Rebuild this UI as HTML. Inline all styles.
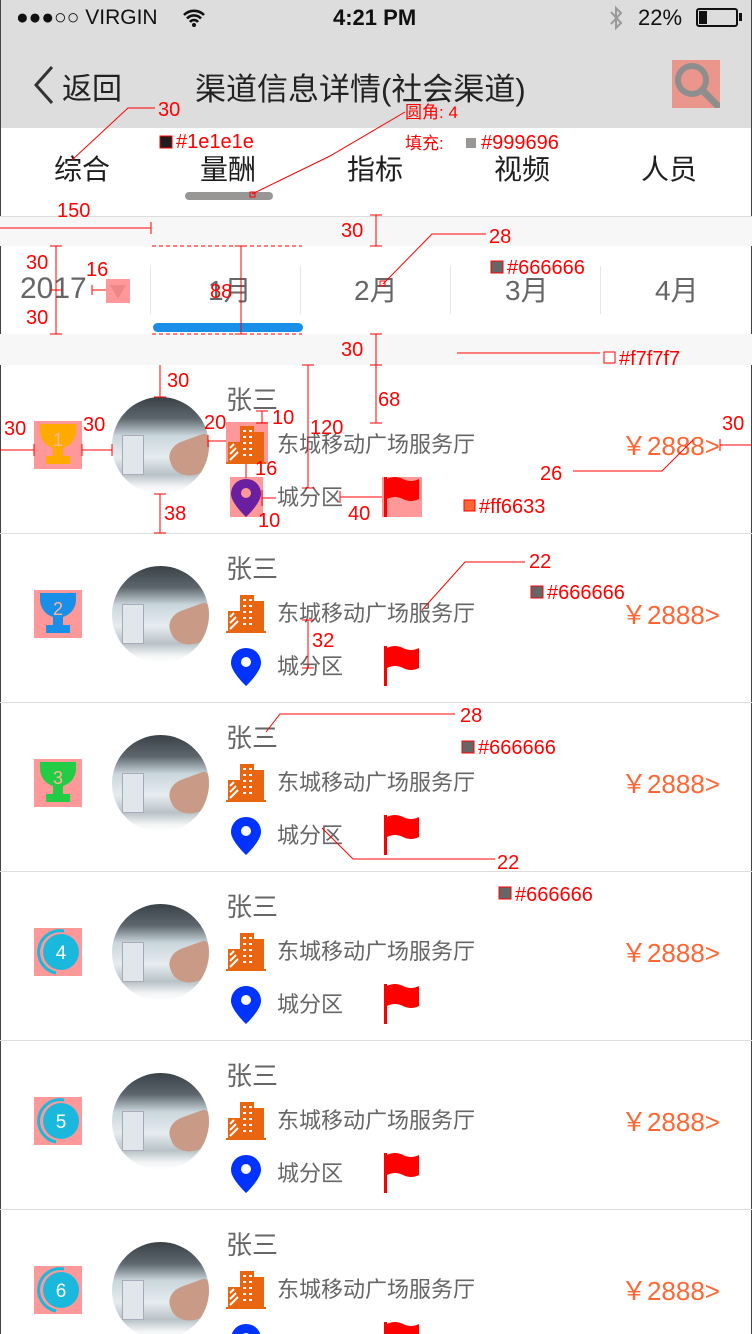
<!DOCTYPE html>
<html><head><meta charset="utf-8"><style>
*{margin:0;padding:0;box-sizing:border-box}
html,body{width:752px;height:1334px;overflow:hidden}
body{position:relative;background:#fff;font-family:"Liberation Sans","Noto Sans CJK SC",sans-serif;color:#1e1e1e}
.a{position:absolute;white-space:nowrap}
.sep{position:absolute;left:0;width:752px;height:1px;background:#ddd}
.name{font-size:26px;color:#666;line-height:30px}
.av{position:absolute;left:112px;width:97px;height:97px;border-radius:50%;overflow:hidden;background:linear-gradient(180deg,#3a4248 0%,#5c666c 22%,#c9d6dc 40%,#e6ecee 62%,#b8c2c6 80%,#f2f4f5 92%,#fff 100%)}
.av i{position:absolute;left:58px;top:42px;width:44px;height:36px;background:#c99a86;border-radius:40% 10% 10% 50%;transform:rotate(-20deg)}
.av b{position:absolute;left:10px;top:38px;width:22px;height:40px;background:#dfe7ea;border:1px solid #aab}
.rk{position:absolute;left:34px;width:48px;height:48px;background:#ff9999}
.pr{position:absolute;right:32px;font-size:26px;color:#ff6633;line-height:30px}
.t22{font-size:22px;color:#666;line-height:26px}
</style></head><body>
<div class="a" style="left:0;top:0;width:752px;height:128px;background:#dddddd"></div>
<div class="a" style="left:0;top:0;width:1px;height:1334px;background:#444"></div>
<div class="a" style="left:751px;top:0;width:1px;height:1334px;background:#444"></div>
<div class="a" style="left:16px;top:6px;font-size:21px;color:#111">●●●○○ VIRGIN</div>
<svg class="a" style="left:182px;top:8px" width="24" height="20" viewBox="0 0 24 20"><path d="M2 7a14 14 0 0 1 20 0M5 10.5a9.5 9.5 0 0 1 14 0M8 14a5 5 0 0 1 8 0" stroke="#111" stroke-width="2.6" fill="none"/><circle cx="12" cy="17" r="2" fill="#111"/></svg>
<div class="a" style="left:333px;top:5px;font-size:22px;font-weight:bold;color:#111">4:21 PM</div>
<svg class="a" style="left:608px;top:4px" width="16" height="28"><path d="M3 8l10 11-5 5V4l5 5L3 20" stroke="#999" stroke-width="2" fill="none"/></svg>
<div class="a" style="left:638px;top:5px;font-size:22px;color:#111">22%</div>
<div class="a" style="left:696px;top:8px;width:42px;height:19px;border:2px solid #111;border-radius:3px"><div style="width:8px;height:13px;background:#111;margin:1px"></div></div>
<div class="a" style="left:739px;top:13px;width:3px;height:8px;background:#111"></div>
<svg class="a" style="left:30px;top:64px" width="26" height="42"><path d="M22 3L6 21L22 39" stroke="#333" stroke-width="3" fill="none"/></svg>
<div class="a" style="left:62px;top:64px;font-size:30px;color:#222">返回</div>
<div class="a" style="left:195px;top:64px;font-size:31px;color:#222">渠道信息详情(社会渠道)</div>
<div class="a" style="left:672px;top:60px;width:48px;height:48px;background:#eb968c"></div>
<svg class="a" style="left:672px;top:60px" width="48" height="48"><circle cx="20" cy="20" r="14" stroke="#8e8e8e" stroke-width="6" fill="none"/><path d="M30 30L45 45" stroke="#8e8e8e" stroke-width="7" stroke-linecap="round"/></svg>
<div class="a" style="left:54px;top:148px;font-size:28px;color:#1e1e1e">综合</div>
<div class="a" style="left:200px;top:148px;font-size:28px;color:#1e1e1e">量酬</div>
<div class="a" style="left:347px;top:148px;font-size:28px;color:#1e1e1e">指标</div>
<div class="a" style="left:494px;top:148px;font-size:28px;color:#1e1e1e">视频</div>
<div class="a" style="left:641px;top:148px;font-size:28px;color:#1e1e1e">人员</div>
<div class="a" style="left:185px;top:192px;width:88px;height:8px;border-radius:4px;background:#999696"></div>
<div class="a" style="left:0;top:216px;width:752px;height:30px;background:#f7f7f7;border-top:1px solid #ddd"></div>
<div class="a" style="left:0;top:334px;width:752px;height:31px;background:#f7f7f7"></div>
<div class="a" style="left:20px;top:272px;font-size:30px;color:#666">2017</div>
<div class="a" style="left:106px;top:279px;width:24px;height:24px;background:#ff9999"></div>
<div class="a" style="left:110px;top:285px;width:0;height:0;border-left:8px solid transparent;border-right:8px solid transparent;border-top:14px solid #e88"></div>
<div class="a" style="left:150px;top:266px;width:1px;height:48px;background:#e6e6e6"></div>
<div class="a" style="left:300px;top:266px;width:1px;height:48px;background:#e6e6e6"></div>
<div class="a" style="left:450px;top:266px;width:1px;height:48px;background:#e6e6e6"></div>
<div class="a" style="left:600px;top:266px;width:1px;height:48px;background:#e6e6e6"></div>
<div class="a" style="left:208px;top:269px;font-size:28px;color:#666">1月</div>
<div class="a" style="left:354px;top:269px;font-size:28px;color:#666">2月</div>
<div class="a" style="left:505px;top:269px;font-size:28px;color:#666">3月</div>
<div class="a" style="left:655px;top:269px;font-size:28px;color:#666">4月</div>
<div class="a" style="left:153px;top:323px;width:150px;height:9px;border-radius:5px;background:#1a8fe8"></div>

<div class="sep" style="top:533px"></div><div class="sep" style="top:702px"></div><div class="sep" style="top:871px"></div><div class="sep" style="top:1040px"></div><div class="sep" style="top:1209px"></div>

<div class="rk" style="top:421px"></div>
<svg class="a" style="left:34px;top:421px" width="48" height="48"><path d="M6 3h36v6a18 18 0 0 1-13 18v8h7v8H12v-8h7v-8A18 18 0 0 1 6 9z" fill="#ffaa00"/><text x="24" y="25" font-size="18" text-anchor="middle" fill="#ffb59a" font-family="Liberation Sans">1</text></svg>
<div class="av" style="top:397px"><b></b><i></i></div>
<div class="a name" style="left:226px;top:385px">张三</div>
<div class="a" style="left:226px;top:422px;width:42px;height:42px;background:#ff9999"></div>
<div class="a" style="left:230px;top:477px;width:33px;height:40px;background:#ff9999"></div>
<div class="a" style="left:382px;top:477px;width:40px;height:40px;background:#ff9999"></div>
<div class="pr" style="top:431px">￥2888&gt;</div>

<div class="rk" style="top:590px"></div>
<svg class="a" style="left:34px;top:590px" width="48" height="48"><path d="M6 3h36v6a18 18 0 0 1-13 18v8h7v8H12v-8h7v-8A18 18 0 0 1 6 9z" fill="#1a8fe8"/><text x="24" y="25" font-size="18" text-anchor="middle" fill="#ffb59a" font-family="Liberation Sans">2</text></svg>
<div class="av" style="top:566px"><b></b><i></i></div>
<div class="a name" style="left:226px;top:554px">张三</div>
<div class="pr" style="top:600px">￥2888&gt;</div>
<div class="rk" style="top:759px"></div>
<svg class="a" style="left:34px;top:759px" width="48" height="48"><path d="M6 3h36v6a18 18 0 0 1-13 18v8h7v8H12v-8h7v-8A18 18 0 0 1 6 9z" fill="#22cc44"/><text x="24" y="25" font-size="18" text-anchor="middle" fill="#ffb59a" font-family="Liberation Sans">3</text></svg>
<div class="av" style="top:735px"><b></b><i></i></div>
<div class="a name" style="left:226px;top:723px">张三</div>
<div class="pr" style="top:769px">￥2888&gt;</div>
<div class="rk" style="top:928px"></div>
<svg class="a" style="left:34px;top:928px" width="48" height="48"><path d="M30 3A21 21 0 0 0 22 45" stroke="#1bb8dd" stroke-width="3" fill="none"/><circle cx="27" cy="24" r="18" fill="#1bb8dd"/><text x="27" y="31" font-size="19" text-anchor="middle" fill="#fff" font-family="Liberation Sans">4</text></svg>
<div class="av" style="top:904px"><b></b><i></i></div>
<div class="a name" style="left:226px;top:892px">张三</div>
<div class="pr" style="top:938px">￥2888&gt;</div>
<div class="rk" style="top:1097px"></div>
<svg class="a" style="left:34px;top:1097px" width="48" height="48"><path d="M30 3A21 21 0 0 0 22 45" stroke="#1bb8dd" stroke-width="3" fill="none"/><circle cx="27" cy="24" r="18" fill="#1bb8dd"/><text x="27" y="31" font-size="19" text-anchor="middle" fill="#fff" font-family="Liberation Sans">5</text></svg>
<div class="av" style="top:1073px"><b></b><i></i></div>
<div class="a name" style="left:226px;top:1061px">张三</div>
<div class="pr" style="top:1107px">￥2888&gt;</div>
<div class="rk" style="top:1266px"></div>
<svg class="a" style="left:34px;top:1266px" width="48" height="48"><path d="M30 3A21 21 0 0 0 22 45" stroke="#1bb8dd" stroke-width="3" fill="none"/><circle cx="27" cy="24" r="18" fill="#1bb8dd"/><text x="27" y="31" font-size="19" text-anchor="middle" fill="#fff" font-family="Liberation Sans">6</text></svg>
<div class="av" style="top:1242px"><b></b><i></i></div>
<div class="a name" style="left:226px;top:1230px">张三</div>
<div class="pr" style="top:1276px">￥2888&gt;</div>

<svg width="0" height="0" style="position:absolute"><defs>
<g id="bld"><rect x="14" y="2" width="14" height="36" fill="#e8660f"/><rect x="28" y="8" width="10" height="30" fill="#e8660f"/><rect x="2" y="18" width="12" height="20" fill="#e8660f"/><rect x="0" y="38" width="40" height="2" fill="#e8660f"/><path d="M17 7h3M23 7h3M17 13h3M23 13h3M17 19h3M23 19h3M17 25h3M23 25h3M17 31h3M23 31h3M4 24l4-4M4 30l6-6M4 36l8-8" stroke="#fff" stroke-width="2"/></g>
<g id="flag"><rect x="2" y="0" width="3" height="40" fill="#f00"/><path d="M5 2q8-4 16 0t16 0v20q-8 4-16 0t-16 0z" fill="#f00"/></g>
</defs></svg>
<div style="position:absolute;left:0;top:0">
<svg class="a" style="left:226px;top:424px" width="40" height="40"><use href="#bld"/></svg>
<svg class="a" style="left:230px;top:478px" width="33" height="40"><path d="M16 1C7 1 1 8 1 16c0 9 15 23 15 23s15-14 15-23C31 8 25 1 16 1z" fill="#6a1fa0"/><circle cx="16" cy="15" r="5" fill="#ff9999"/></svg>
<svg class="a" style="left:382px;top:477px" width="40" height="40"><use href="#flag"/></svg>
<div class="a t22" style="left:277px;top:432px">东城移动广场服务厅</div>
<div class="a t22" style="left:277px;top:485px">城分区</div>
</div>
<div style="position:absolute;left:0;top:169px">
<svg class="a" style="left:226px;top:424px" width="40" height="40"><use href="#bld"/></svg>
<svg class="a" style="left:230px;top:478px" width="33" height="40"><path d="M16 1C7 1 1 8 1 16c0 9 15 23 15 23s15-14 15-23C31 8 25 1 16 1z" fill="#0033ff"/><circle cx="16" cy="15" r="5" fill="#fff"/></svg>
<svg class="a" style="left:382px;top:477px" width="40" height="40"><use href="#flag"/></svg>
<div class="a t22" style="left:277px;top:432px">东城移动广场服务厅</div>
<div class="a t22" style="left:277px;top:485px">城分区</div>
</div>
<div style="position:absolute;left:0;top:338px">
<svg class="a" style="left:226px;top:424px" width="40" height="40"><use href="#bld"/></svg>
<svg class="a" style="left:230px;top:478px" width="33" height="40"><path d="M16 1C7 1 1 8 1 16c0 9 15 23 15 23s15-14 15-23C31 8 25 1 16 1z" fill="#0033ff"/><circle cx="16" cy="15" r="5" fill="#fff"/></svg>
<svg class="a" style="left:382px;top:477px" width="40" height="40"><use href="#flag"/></svg>
<div class="a t22" style="left:277px;top:432px">东城移动广场服务厅</div>
<div class="a t22" style="left:277px;top:485px">城分区</div>
</div>
<div style="position:absolute;left:0;top:507px">
<svg class="a" style="left:226px;top:424px" width="40" height="40"><use href="#bld"/></svg>
<svg class="a" style="left:230px;top:478px" width="33" height="40"><path d="M16 1C7 1 1 8 1 16c0 9 15 23 15 23s15-14 15-23C31 8 25 1 16 1z" fill="#0033ff"/><circle cx="16" cy="15" r="5" fill="#fff"/></svg>
<svg class="a" style="left:382px;top:477px" width="40" height="40"><use href="#flag"/></svg>
<div class="a t22" style="left:277px;top:432px">东城移动广场服务厅</div>
<div class="a t22" style="left:277px;top:485px">城分区</div>
</div>
<div style="position:absolute;left:0;top:676px">
<svg class="a" style="left:226px;top:424px" width="40" height="40"><use href="#bld"/></svg>
<svg class="a" style="left:230px;top:478px" width="33" height="40"><path d="M16 1C7 1 1 8 1 16c0 9 15 23 15 23s15-14 15-23C31 8 25 1 16 1z" fill="#0033ff"/><circle cx="16" cy="15" r="5" fill="#fff"/></svg>
<svg class="a" style="left:382px;top:477px" width="40" height="40"><use href="#flag"/></svg>
<div class="a t22" style="left:277px;top:432px">东城移动广场服务厅</div>
<div class="a t22" style="left:277px;top:485px">城分区</div>
</div>
<div style="position:absolute;left:0;top:845px">
<svg class="a" style="left:226px;top:424px" width="40" height="40"><use href="#bld"/></svg>
<svg class="a" style="left:230px;top:478px" width="33" height="40"><path d="M16 1C7 1 1 8 1 16c0 9 15 23 15 23s15-14 15-23C31 8 25 1 16 1z" fill="#0033ff"/><circle cx="16" cy="15" r="5" fill="#fff"/></svg>
<svg class="a" style="left:382px;top:477px" width="40" height="40"><use href="#flag"/></svg>
<div class="a t22" style="left:277px;top:432px">东城移动广场服务厅</div>
</div>

<svg class="a" style="left:0;top:0" width="752" height="1334">
<g stroke="#f00" stroke-width="1" fill="none">
<path d="M72 160L128 108H155"/><path d="M252 194L330 156L405 112"/>
<path d="M0 228H151M151 222v12"/><path d="M370 215h12M376 215v31M370 246h12"/>
<path d="M383 284L432 234H486"/>
<path d="M50 246h12M56 246v88M50 334h12M50 290h12"/><path d="M92 290h14M92 285v10"/>
<path d="M241 246v88M235 246h12M235 334h12"/>
<path d="M152 246h150M152 334h150" stroke-dasharray="4 3"/>
<path d="M370 334h12M376 334v31M370 365h12M376 365v58M370 423h12"/><path d="M457 353H600"/>
<path d="M0 450h34M34 444v12M82 450h30M82 444v12M112 444v12"/>
<path d="M160 365v32M154 397h12M160 494v39M154 494h12M154 533h12"/>
<path d="M208 441h18M208 435v12"/><path d="M262 411v12M256 411h12M256 423h12"/>
<path d="M246 464v14"/><path d="M262 490v16M262 498h14"/>
<path d="M308 365v123M302 365h12M302 488h12"/><path d="M340 497h42M340 491v12"/>
<path d="M720 445h32M720 439v12"/><path d="M573 471H662L693 440"/>
<path d="M422 610L465 562H525"/><path d="M308 630v-10v48M302 620h12M302 668h12"/>
<path d="M266 732L280 714H455"/><path d="M322 828L353 859H495"/>
</g>
<g fill="#f00" font-family="Liberation Sans" font-size="20">
<text x="158" y="116">30</text><text x="405" y="118" font-size="17">圆角: 4</text>
<text x="176" y="148">#1e1e1e</text><text x="405" y="149" font-size="17">填充:</text><text x="481" y="149">#999696</text>
<text x="57" y="217">150</text><text x="341" y="237">30</text><text x="489" y="243">28</text><text x="507" y="274">#666666</text>
<text x="26" y="269">30</text><text x="86" y="276">16</text><text x="26" y="324">30</text><text x="210" y="298">88</text>
<text x="341" y="356">30</text><text x="619" y="365">#f7f7f7</text>
<text x="167" y="387">30</text><text x="378" y="406">68</text><text x="4" y="435">30</text><text x="83" y="431">30</text><text x="204" y="429">20</text>
<text x="272" y="424">10</text><text x="310" y="434">120</text><text x="722" y="430">30</text><text x="255" y="475">16</text>
<text x="540" y="480">26</text><text x="258" y="527">10</text><text x="348" y="520">40</text><text x="164" y="520">38</text><text x="479" y="513">#ff6633</text>
<text x="529" y="568">22</text><text x="547" y="599">#666666</text><text x="312" y="647">32</text>
<text x="460" y="722">28</text><text x="478" y="754">#666666</text><text x="497" y="869">22</text><text x="515" y="901">#666666</text>
</g>
<g stroke="#f00" stroke-width="1">
<rect x="160" y="136" width="12" height="12" fill="#1e1e1e"/><rect x="466" y="138" width="10" height="10" fill="#999696" stroke="none"/>
<rect x="491" y="261" width="12" height="12" fill="#666"/><rect x="604" y="352" width="11" height="11" fill="#fff"/>
<rect x="464" y="500" width="11" height="11" fill="#ff6633"/><rect x="531" y="586" width="12" height="12" fill="#666"/>
<rect x="462" y="741" width="12" height="12" fill="#666"/><rect x="499" y="887" width="12" height="12" fill="#666"/>
<rect x="250" y="192" width="5" height="5" fill="none"/><rect x="380" y="281" width="5" height="5" fill="none"/>
</g>
</svg>
</body></html>
